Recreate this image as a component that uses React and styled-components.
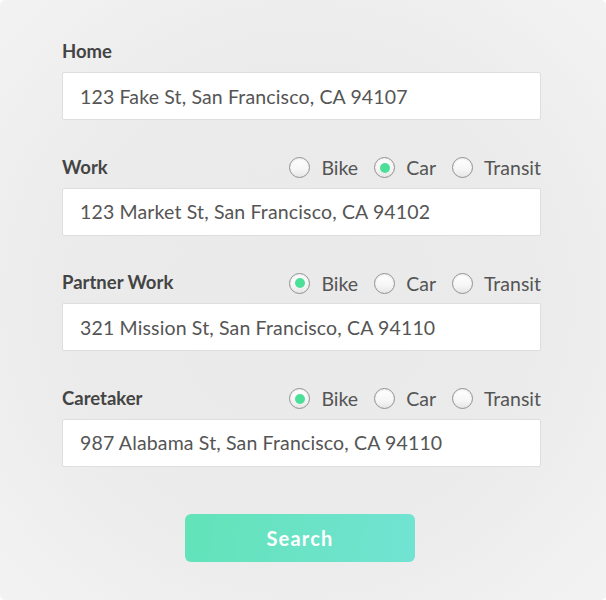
import React, { useState } from "react";
import styled, { createGlobalStyle } from "styled-components";

const GlobalStyle = createGlobalStyle`
  html, body {
    margin: 0;
    padding: 0;
    background: #ffffff;
  }
  * {
    box-sizing: border-box;
  }
`;

const modes = ["Bike", "Car", "Transit"];

const initialRows = [
  { id: "home", label: "Home", address: "123 Fake St, San Francisco, CA 94107", mode: null },
  { id: "work", label: "Work", address: "123 Market St, San Francisco, CA 94102", mode: "Car" },
  { id: "partner", label: "Partner Work", address: "321 Mission St, San Francisco, CA 94110", mode: "Bike" },
  { id: "caretaker", label: "Caretaker", address: "987 Alabama St, San Francisco, CA 94110", mode: "Bike" },
];

const App = () => {
  const [rows, setRows] = useState(initialRows);

  const pick = (id, mode) =>
    setRows((prev) => prev.map((r) => (r.id === id ? { ...r, mode } : r)));

  return (
    <>
      <GlobalStyle />
      <Card>
        <Form>
          {rows.map((row) => (
            <Field key={row.id}>
              <Header>
                <Label>{row.label}</Label>
                {row.mode !== null && (
                  <Radios>
                    {modes.map((m) => (
                      <RadioItem key={m} onClick={() => pick(row.id, m)}>
                        <Circle>{row.mode === m && <Dot />}</Circle>
                        <RadioText>{m}</RadioText>
                      </RadioItem>
                    ))}
                  </Radios>
                )}
              </Header>
              <Input defaultValue={row.address} />
            </Field>
          ))}
          <ButtonRow>
            <SearchButton>Search</SearchButton>
          </ButtonRow>
        </Form>
      </Card>
    </>
  );
};

export default App;

const font = `"Lato", "Open Sans", sans-serif`;

const Card = styled.div`
  width: 606px;
  height: 600px;
  border-radius: 5px;
  background: radial-gradient(ellipse at 50% 50%, #eaeaea 0%, #ebebeb 55%, #f3f3f3 100%);
  padding: 38px 65px 0 62px;
`;

const Form = styled.div`
  display: flex;
  flex-direction: column;
  gap: 33.5px;
`;

const Field = styled.div`
  display: flex;
  flex-direction: column;
`;

const Header = styled.div`
  height: 26px;
  margin-bottom: 8px;
  display: flex;
  align-items: center;
  justify-content: space-between;
`;

const Label = styled.div`
  font-family: ${font};
  font-weight: 700;
  font-size: 18.5px;
  color: #444444;
`;

const Radios = styled.div`
  display: flex;
  align-items: center;
  gap: 16px;
  padding-top: 2px;
`;

const RadioItem = styled.div`
  display: flex;
  align-items: center;
  gap: 11px;
  cursor: pointer;
`;

const Circle = styled.div`
  width: 21px;
  height: 21px;
  border-radius: 50%;
  border: 1px solid #929292;
  background: linear-gradient(180deg, #ffffff 0%, #f6f6f6 60%, #e6e6e6 100%);
  box-shadow: inset 0 1px 2px rgba(0, 0, 0, 0.08);
  display: flex;
  align-items: center;
  justify-content: center;
`;

const Dot = styled.div`
  width: 10px;
  height: 10px;
  border-radius: 50%;
  background: #4cdf97;
`;

const RadioText = styled.span`
  font-family: ${font};
  font-size: 19.5px;
  color: #555555;
`;

const Input = styled.input`
  height: 48px;
  width: 100%;
  border: 1px solid #dedede;
  border-radius: 2px;
  background: #ffffff;
  padding: 0 17px;
  font-family: ${font};
  font-size: 19.5px;
  letter-spacing: 0.15px;
  color: #555555;
  outline: none;
`;

const ButtonRow = styled.div`
  display: flex;
  justify-content: center;
  margin-top: 14px;
  padding-right: 3px;
`;

const SearchButton = styled.button`
  width: 230px;
  height: 48px;
  border: none;
  border-radius: 6px;
  background: linear-gradient(100deg, #62e3b8 0%, #72e3d3 100%);
  color: #ffffff;
  font-family: ${font};
  font-weight: 700;
  font-size: 20px;
  letter-spacing: 1.2px;
  cursor: pointer;
`;
